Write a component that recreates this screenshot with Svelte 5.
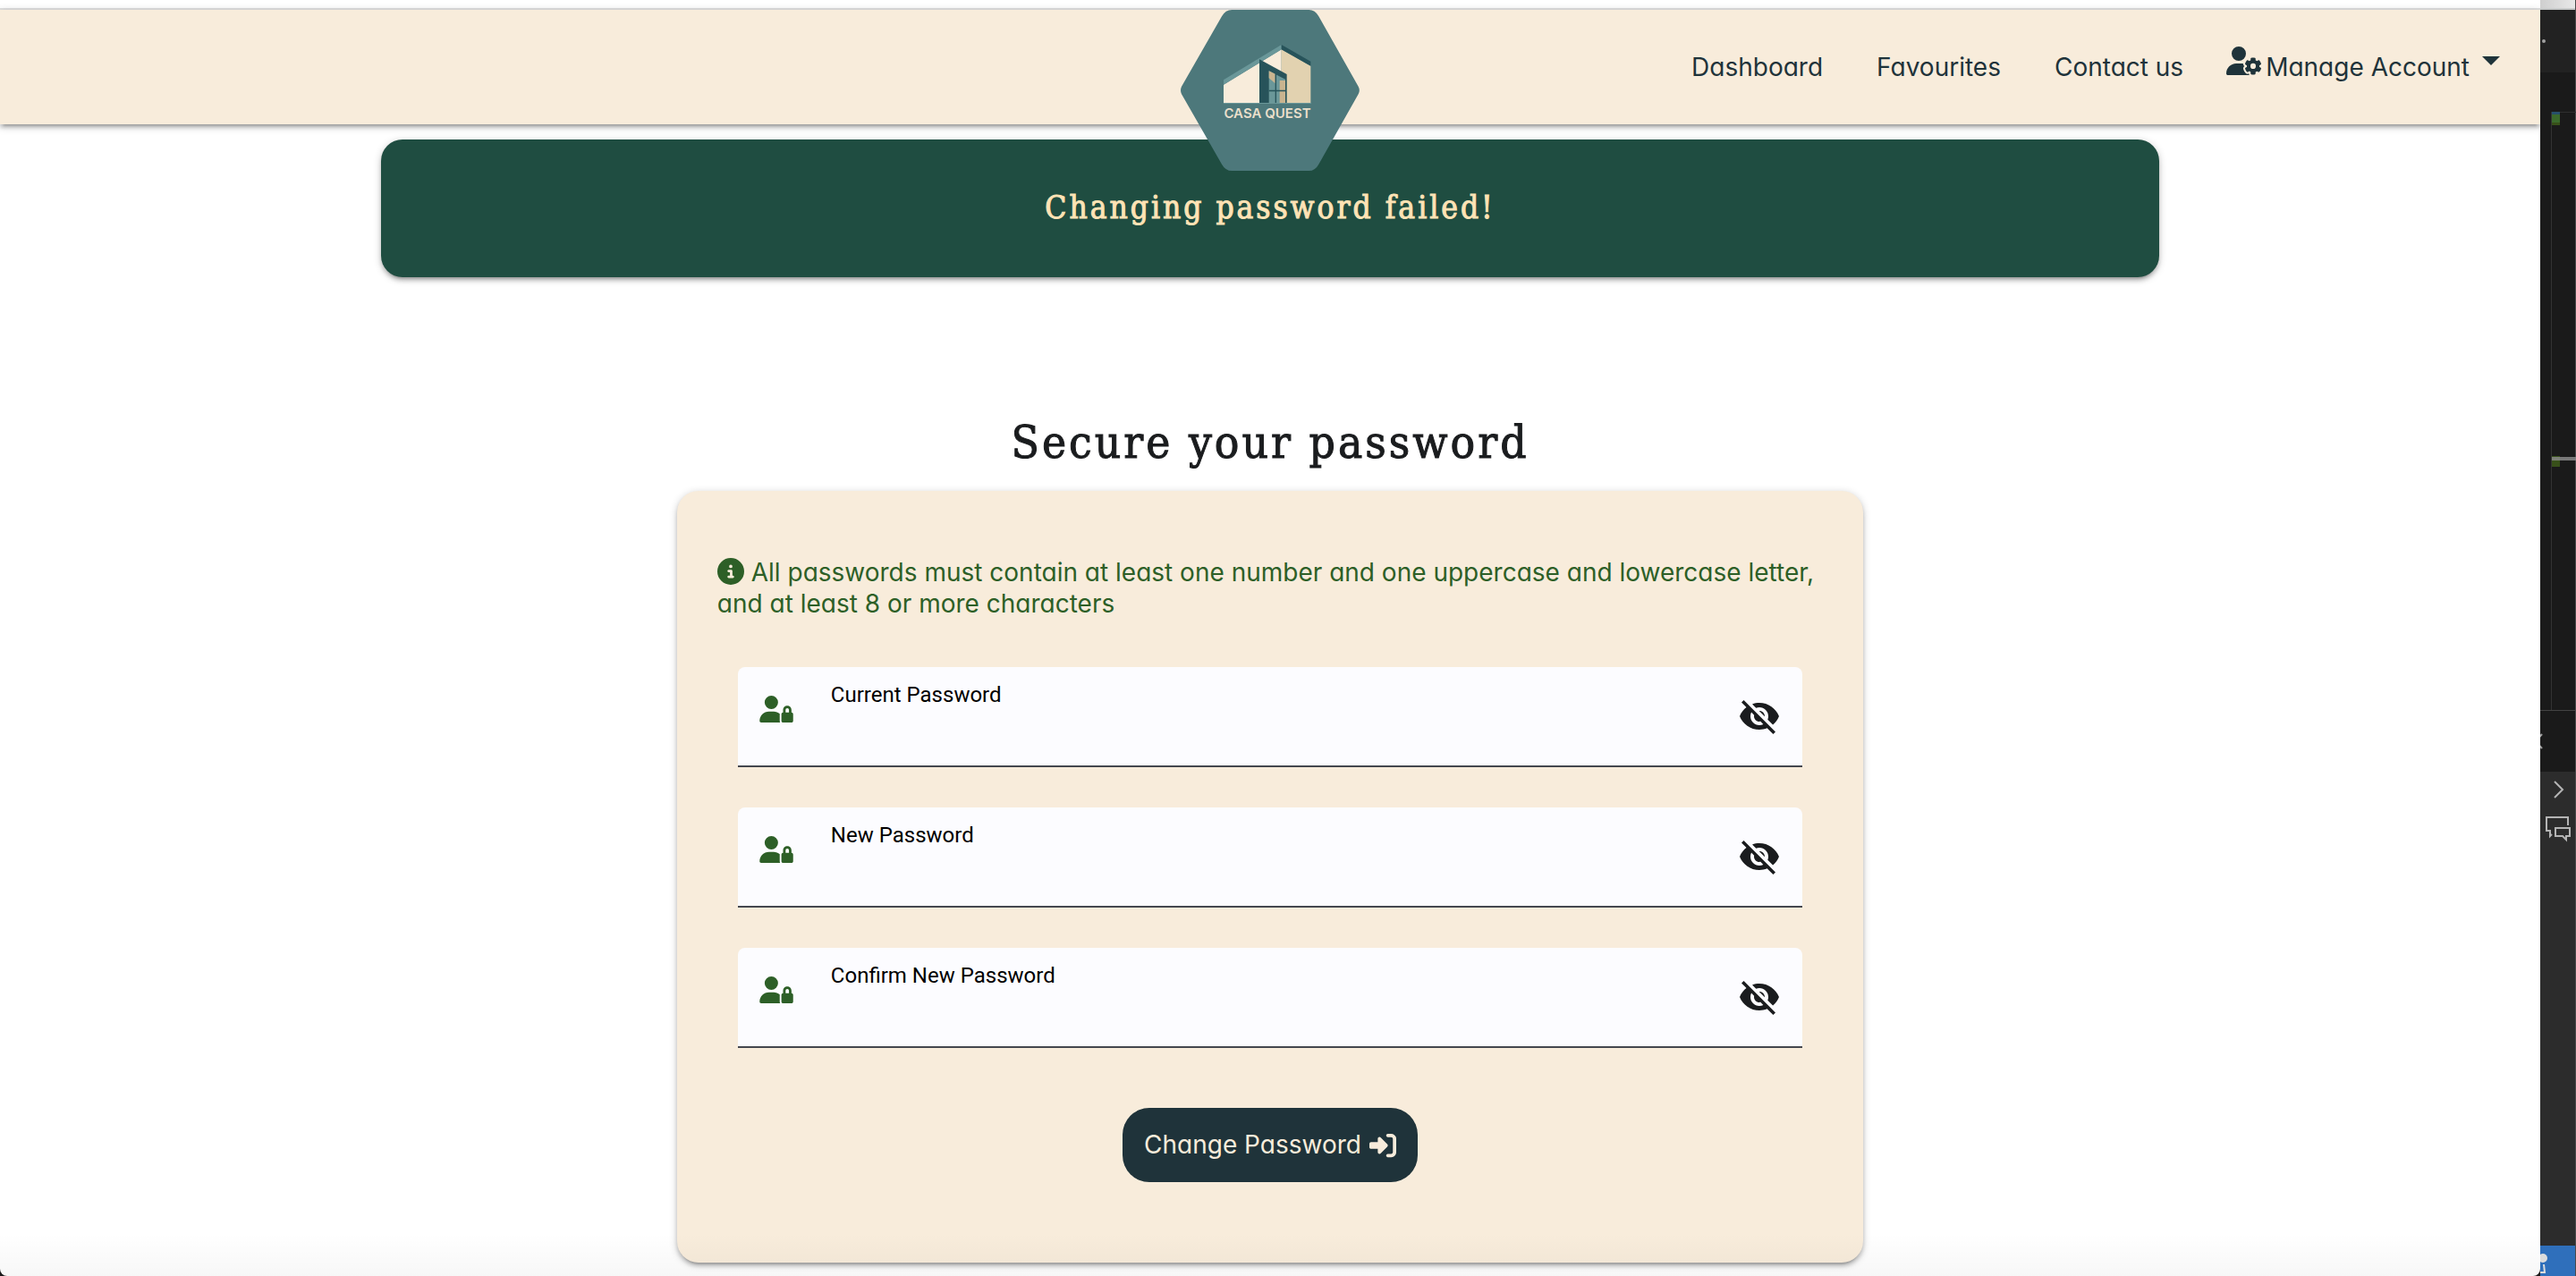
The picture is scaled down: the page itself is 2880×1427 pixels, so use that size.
<script>
  const links = ['Dashboard', 'Favourites', 'Contact us'];

  let fields = $state([
    { id: 'current-password', label: 'Current Password', value: '', visible: false },
    { id: 'new-password', label: 'New Password', value: '', visible: false },
    { id: 'confirm-password', label: 'Confirm New Password', value: '', visible: false }
  ]);
</script>

<div class="desktop">
  <div class="browser">
    <div class="chrome"></div>

    <header class="navbar">
      <a class="logo" href="#home" aria-label="Casa Quest home">
        <svg viewBox="0 0 200 180" width="200" height="180">
          <svg viewBox="60 33 600 540" width="200" height="180">
            <path fill="#4d787b" d="M63 290 L198 55 Q210 33 232 33 H490 Q511 33 523 55 L656 290 Q663 303 656 316 L523 551 Q511 573 490 573 H232 Q210 573 198 551 L63 316 Q57 303 63 290Z" />
            <path fill="#f8ecdb" d="M204 284 398 166V346H204Z" />
            <path fill="#e2d2b0" d="M398 166 496 221V346H398Z" />
            <path fill="#6a9799" d="M204 268 398 150V166L204 284Z" />
            <path fill="#27535a" d="M398 150 496 206V221L398 166Z" />
            <path fill="#27535a" d="M324 199 416 249V346H324Z" />
            <path fill="#6a9799" d="M356 238 411 266V346H356Z" />
            <path fill="#c9b48f" d="M356 238 377 248V280L356 262Z" />
            <path fill="#c9b48f" d="M392 270H411V346H392Z" />
            <path fill="#27535a" d="M377 246H381V346H377ZM356 302H412V307H356Z" />
            <path fill="#6a9799" d="M204 345H498V348H204Z" />
          </svg>
          <text class="logo-text" x="97" y="121" text-anchor="middle">CASA QUEST</text>
        </svg>
      </a>
      <nav class="links" aria-label="Main">
        {#each links as link}
          <a href="#{link.toLowerCase().replace(' ', '-')}">{link}</a>
        {/each}
        <button class="account" type="button" aria-haspopup="menu">
          <svg class="gear-icon" viewBox="0 0 640 512" width="40" height="32" fill="currentColor" aria-hidden="true">
            <path d="M224 0a128 128 0 1 1 0 256A128 128 0 1 1 224 0zM178.300 304h91.400c11.800 0 23.400 1.200 34.500 3.300c-2.100 18.500 7.400 35.600 21.800 44.800c-16.600 10.600-26.700 31.600-20 53.300c4 12.900 9.400 25.500 16.400 37.600s15.200 23.100 24.400 33c15.700 16.900 39.600 18.400 57.200 8.700v.9c0 9.200 2.700 18.500 7.900 26.300H29.700C13.300 512 0 498.700 0 482.300C0 383.800 79.800 304 178.300 304zM436 218.200c0-7 4.500-13.300 11.300-14.800c10.500-2.400 21.500-3.700 32.700-3.700s22.200 1.300 32.700 3.700c6.800 1.500 11.300 7.800 11.300 14.800v30.600c7.900 3.400 15.400 7.700 22.300 12.800l24.900-14.300c6.100-3.500 13.700-2.700 18.500 2.400c7.600 8.100 14.300 17.200 20.100 27.200s10.300 20.400 13.500 31c2.100 6.700-1.100 13.700-7.200 17.200l-25 14.400c.4 4 .7 8.100 .7 12.300s-.2 8.200-.7 12.300l25 14.400c6.100 3.500 9.200 10.500 7.200 17.200c-3.300 10.600-7.800 21-13.500 31s-12.500 19.100-20.100 27.200c-4.800 5.100-12.500 5.900-18.500 2.400l-24.900-14.300c-6.900 5.100-14.300 9.400-22.300 12.800l0 30.600c0 7-4.500 13.300-11.300 14.800c-10.500 2.400-21.500 3.700-32.700 3.700s-22.200-1.300-32.700-3.700c-6.800-1.500-11.300-7.800-11.300-14.800V454.800c-8-3.400-15.600-7.700-22.500-12.900l-24.700 14.300c-6.100 3.500-13.700 2.700-18.500-2.400c-7.600-8.100-14.300-17.200-20.100-27.200s-10.300-20.400-13.500-31c-2.100-6.700 1.100-13.700 7.200-17.200l24.800-14.300c-.4-4.100-.7-8.200-.7-12.400s.2-8.300 .7-12.400L343.800 325c-6.100-3.500-9.200-10.500-7.200-17.200c3.300-10.600 7.700-21 13.500-31s12.500-19.100 20.100-27.200c4.800-5.100 12.400-5.900 18.500-2.400l24.800 14.300c6.900-5.100 14.500-9.400 22.500-12.900V218.200zm92.100 133.500a48.100 48.100 0 1 0 -96.100 0 48.100 48.100 0 1 0 96.100 0z" />
          </svg>
          <span>Manage Account</span>
          <span class="caret"></span>
        </button>
      </nav>
    </header>

    <main>
      <div class="alert" role="alert">Changing password failed!</div>

      <h1>Secure your password</h1>

      <form class="card" onsubmit={(e) => e.preventDefault()}>
        <p class="hint">
          <svg viewBox="0 0 512 512" width="30" height="30" fill="currentColor" aria-hidden="true">
            <path d="M256 512A256 256 0 1 0 256 0a256 256 0 1 0 0 512zM216 336h24V272H216c-13.300 0-24-10.700-24-24s10.700-24 24-24h48c13.300 0 24 10.700 24 24v88h8c13.300 0 24 10.700 24 24s-10.700 24-24 24H216c-13.300 0-24-10.700-24-24s10.700-24 24-24zm40-208a32 32 0 1 1 0 64 32 32 0 1 1 0-64z" />
          </svg>
          All passwords must contain at least one number and one uppercase and lowercase letter, and at least 8 or more characters
        </p>

        <div class="fields">
          {#each fields as field (field.id)}
            <div class="field">
              <svg class="lock-icon" viewBox="0 0 640 512" width="38" height="30" fill="currentColor" aria-hidden="true">
                <path d="M224 256A128 128 0 1 0 224 0a128 128 0 1 0 0 256zm-45.700 48C79.800 304 0 383.800 0 482.300C0 498.700 13.300 512 29.700 512H392.600c-5.400-9.400-8.600-20.300-8.600-32V352c0-2.100 .1-4.200 .3-6.300c-31-26-71-41.700-114.600-41.700H178.300zM528 240c17.700 0 32 14.300 32 32v48H496V272c0-17.700 14.300-32 32-32zm-80 32v48c-17.700 0-32 14.300-32 32V480c0 17.700 14.300 32 32 32H608c17.700 0 32-14.300 32-32V352c0-17.700-14.300-32-32-32V272c0-44.200-35.800-80-80-80s-80 35.800-80 80z" />
              </svg>
              <div class="entry">
                <label for={field.id}>{field.label}</label>
                <input id={field.id} type={field.visible ? 'text' : 'password'} bind:value={field.value} />
              </div>
              <button
                class="toggle"
                type="button"
                aria-label="Show {field.label}"
                aria-pressed={field.visible}
                onclick={() => (field.visible = !field.visible)}
              >
                <svg viewBox="0 0 24 24" width="48" height="48" fill="currentColor" aria-hidden="true">
                  <path d="M12 7c2.760 0 5 2.240 5 5 0 .650-.130 1.260-.360 1.830l2.920 2.920c1.510-1.260 2.700-2.890 3.430-4.750-1.730-4.390-6-7.500-11-7.500-1.400 0-2.740.250-3.980.700l2.160 2.160C10.740 7.130 11.350 7 12 7zM2 4.270l2.280 2.280.460.460C3.080 8.300 1.780 10.020 1 12c1.730 4.390 6 7.500 11 7.500 1.550 0 3.030-.300 4.380-.840l.420.420L19.730 22 21 20.730 3.270 3 2 4.270zM7.530 9.800l1.550 1.550c-.050.210-.080.430-.080.650 0 1.660 1.340 3 3 3 .220 0 .440-.030.650-.080l1.550 1.550c-.670.330-1.410.530-2.200.530-2.760 0-5-2.240-5-5 0-.790.200-1.530.530-2.200zm4.310-.780l3.150 3.150.020-.160c0-1.660-1.340-3-3-3l-.170.010z" />
                </svg>
              </button>
            </div>
          {/each}
        </div>

        <button class="submit" type="submit">
          <span>Change Password</span>
          <svg viewBox="0 0 512 512" width="30" height="30" fill="currentColor" aria-hidden="true">
            <path d="M217.900 105.900L340.700 228.700c7.200 7.200 11.300 17.100 11.300 27.300s-4.100 20.100-11.300 27.300L217.900 406.100c-6.400 6.400-15 9.900-24 9.900c-18.700 0-33.900-15.200-33.900-33.900l0-62.100L32 320c-17.700 0-32-14.300-32-32l0-64c0-17.700 14.300-32 32-32l128 0 0-62.100c0-18.700 15.200-33.900 33.900-33.900c9 0 17.600 3.600 24 9.900zM352 416l64 0c17.700 0 32-14.300 32-32l0-256c0-17.700-14.300-32-32-32l-64 0c-17.700 0-32-14.300-32-32s14.300-32 32-32l64 0c53 0 96 43 96 96l0 256c0 53-43 96-96 96l-64 0c-17.700 0-32-14.300-32-32s14.300-32 32-32z" />
          </svg>
        </button>
      </form>
    </main>
  </div>

  <aside class="editor" aria-hidden="true">
    <div class="editor-top"></div>
    <div class="editor-title"><span class="dot"></span></div>
    <div class="editor-tabs"></div>
    <div class="editor-map">
      <svg viewBox="0 0 27 669" width="27" height="669">
        <path fill="#2f2f2f" d="M0 0H27V1H0Z" />
        <path fill="#27506b" d="M0 0H9V3H0Z" />
        <path fill="#3b6a2c" d="M0 3H9V12H0Z" />
        <path fill="#38501a" d="M0 12H9V15H0Z" />
        <path fill="#38501a" d="M0 385H9V397H0Z" />
        <path fill="#8a8a8a" fill-opacity=".85" d="M0 386H27V390H0Z" />
      </svg>
    </div>
    <div class="editor-panel">
      <svg viewBox="0 0 40 68" width="40" height="68" fill="none" stroke="#a0a0a0" stroke-width="2">
        <path d="M2 26 -5 34 2 42" />
      </svg>
    </div>
    <div class="editor-side">
      <svg viewBox="0 0 40 100" width="40" height="100" fill="none" stroke="#b4b4b4" stroke-width="2">
        <path d="M16 11 25 20 16 29" />
        <path d="M31 60V51H7V66H11V72L13 70" />
        <path d="M17 63H33V72H29V76L25 72H17Z" />
      </svg>
    </div>
    <div class="editor-status">
      <svg viewBox="0 0 40 34" width="40" height="34">
        <circle cx="3" cy="14" r="5" fill="#dcdcdc" />
        <path d="M4 21 5 30H0" fill="none" stroke="#dcdcdc" stroke-width="2" />
      </svg>
    </div>
  </aside>
</div>

<style>
  :global(body) {
    background: #1a1a1a;
  }

  .desktop {
    --cream: #f8ecdb;
    --ink: #1f333a;
    --leaf: #2d5f27;
    --shadow: 0 4px 4px rgba(0, 0, 0, 0.16), 0 6px 2px -4px rgba(0, 0, 0, 0.14), 0 2px 10px rgba(0, 0, 0, 0.2);
    display: flex;
    min-height: 100vh;
    font-family: Inter, 'Liberation Sans', sans-serif;
    font-feature-settings: 'cv11';
    font-size: 28px;
    line-height: 35px;
    color: var(--ink);
  }

  .desktop * {
    box-sizing: border-box;
  }

  svg {
    flex: none;
  }

  button {
    border: 0;
    padding: 0;
    background: none;
    font: inherit;
    font-feature-settings: inherit;
    color: inherit;
    cursor: pointer;
  }

  .browser {
    position: relative;
    flex: 1;
    min-width: 0;
    display: flex;
    flex-direction: column;
    background: #fff;
    border-radius: 0 0 8px 8px;
    overflow: hidden;
  }

  .browser::after {
    content: '';
    position: absolute;
    inset: auto 0 0;
    height: 48px;
    background: linear-gradient(transparent, rgba(0, 0, 0, 0.03));
    pointer-events: none;
  }

  .chrome {
    height: 11px;
    border-bottom: 2px solid #e0e0e0;
  }

  .navbar {
    position: relative;
    z-index: 1;
    display: grid;
    grid-template: 128px / 1fr 200px 1fr;
    align-items: center;
    height: 128px;
    background: var(--cream);
    box-shadow: var(--shadow);
  }

  .logo {
    grid-column: 2;
    align-self: start;
    height: 180px;
  }

  .logo svg {
    display: block;
  }

  .logo-text {
    font-size: 15px;
    font-weight: 600;
    fill: #eadfcb;
  }

  .links {
    display: flex;
    align-items: center;
    justify-content: flex-end;
    gap: 60px;
    padding-right: 45px;
    white-space: nowrap;
  }

  .links a {
    color: inherit;
    text-decoration: none;
  }

  .account {
    display: flex;
    align-items: center;
    margin-left: -12px;
  }

  .gear-icon {
    margin: 0 4px 14px 0;
  }

  .caret {
    margin: 0 0 14px 14px;
    border: 10px solid transparent;
    border-top-color: currentColor;
    border-bottom: 0;
  }

  main {
    flex: 1;
    display: flex;
    flex-direction: column;
    align-items: center;
    padding: 17px 0 15px;
  }

  .alert,
  h1 {
    font-family: 'DejaVu Serif Condensed', 'DejaVu Serif', serif;
    text-align: center;
    letter-spacing: 3px;
    -webkit-text-stroke: 1px currentColor;
  }

  .alert {
    width: 70%;
    padding: 52px 24px 54px;
    border-radius: 24px;
    background: #1f4d41;
    box-shadow: var(--shadow);
    color: #ffe3b5;
    font-size: 35px;
    line-height: 48px;
  }

  h1 {
    margin: 149px 0 18px;
    color: #1a1c1e;
    font-size: 51px;
    font-weight: 400;
    line-height: 72px;
  }

  .card {
    flex: 1;
    width: 46.7%;
    display: flex;
    flex-direction: column;
    padding: 74px 45px 90px;
    border-radius: 24px;
    background: var(--cream);
    box-shadow: var(--shadow);
  }

  .hint {
    margin: 0;
    color: var(--leaf);
  }

  .hint svg {
    vertical-align: -4px;
  }

  .fields {
    display: flex;
    flex-direction: column;
    gap: 45px;
    margin-top: 53px;
    padding: 0 23px;
  }

  .field {
    display: flex;
    height: 112px;
    padding: 0 24px;
    border-bottom: 2px solid #44474e;
    border-radius: 8px 8px 0 0;
    background: #fcfcff;
  }

  .lock-icon {
    margin-top: 32px;
    color: var(--leaf);
  }

  .entry {
    flex: 1;
    display: flex;
    flex-direction: column;
    margin: 15px 24px 8px 42px;
    font-family: Roboto, sans-serif;
    color: #000;
  }

  .entry label {
    font-size: 24px;
    line-height: 32px;
  }

  .entry input {
    flex: 1;
    width: 100%;
    min-height: 0;
    padding: 0;
    border: 0;
    outline: 0;
    background: transparent;
    font: inherit;
  }

  .toggle {
    align-self: center;
    height: 48px;
    color: #1a1c1e;
  }

  .toggle svg {
    display: block;
  }

  .submit {
    align-self: center;
    display: flex;
    align-items: center;
    gap: 9px;
    margin-top: 67px;
    padding: 24px;
    border-radius: 30px;
    background: var(--ink);
    color: var(--cream);
  }

  .editor {
    flex: none;
    width: 40px;
    display: flex;
    flex-direction: column;
    border-right: 1px solid #4a4a4a;
    background: #1a1a1a;
  }

  .editor svg {
    display: block;
  }

  .editor-top {
    height: 11px;
    border-bottom: 2px solid #c8caca;
    background: linear-gradient(90deg, #cfcfcf, #e8e8e8);
  }

  .editor-title {
    height: 70px;
    padding: 33px 0 0 2px;
    background: #222;
  }

  .dot {
    display: block;
    width: 4px;
    height: 4px;
    border-radius: 50%;
    background: #a0a0a0;
  }

  .editor-tabs {
    height: 44px;
  }

  .editor-map {
    height: 669px;
    margin-left: 12px;
    border-left: 1px solid #333;
  }

  .editor-panel {
    height: 69px;
    border-top: 1px solid #444;
    overflow: hidden;
  }

  .editor-side {
    flex: 1;
    background: #2c2c2c;
  }

  .editor-status {
    height: 34px;
    background: #2f6fbb;
    overflow: hidden;
  }
</style>
